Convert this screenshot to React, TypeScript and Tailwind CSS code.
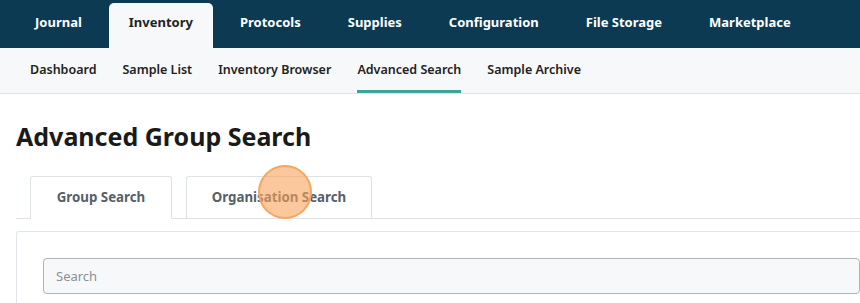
import React from "react";

const topItems = ["Journal", "Inventory", "Protocols", "Supplies", "Configuration", "File Storage", "Marketplace"];
const subItems = ["Dashboard", "Sample List", "Inventory Browser", "Advanced Search", "Sample Archive"];

export default function App() {
  return (
    <div className="h-[303px] w-[860px] overflow-hidden bg-white font-['Noto_Sans',sans-serif]">
      {/* top nav */}
      <div className="flex h-12 items-end gap-[7px] bg-[#0b3a52] pl-[15px]">
        {topItems.map((item) => (
          <div
            key={item}
            className={
              item === "Inventory"
                ? "flex h-[45px] items-center rounded-t-[5px] bg-[#f6f8fa] px-5 pb-[5px] text-[13px] font-bold text-[#222]"
                : "flex h-[45px] items-center px-5 pb-[5px] text-[13px] font-bold text-white"
            }
          >
            {item}
          </div>
        ))}
      </div>

      {/* sub nav */}
      <div className="flex h-[46px] items-stretch gap-[26px] border-b border-[#e2e5e8] bg-[#f6f8fa] pl-[30px]">
        {subItems.map((item) => (
          <div
            key={item}
            className={
              item === "Advanced Search"
                ? "flex items-center border-b-[3px] border-[#3aa69a] pt-[3px] text-[12.5px] font-semibold text-[#222]"
                : "flex items-center text-[12.5px] font-semibold text-[#222]"
            }
          >
            {item}
          </div>
        ))}
      </div>

      <div className="pl-4">
        <h1 className="pt-[26px] text-[25px] font-bold leading-[32px] text-[#1a1a1a]">Advanced Group Search</h1>

        {/* tabs */}
        <div className="relative mt-[24px] flex gap-[14px] border-b border-[#dee2e6] pl-[14px]">
          <div className="-mb-px flex h-[43px] w-[142px] items-center justify-center rounded-t-[3px] border border-b-white border-[#dee2e6] bg-white text-[13.3px] font-bold text-[#56606a]">
            Group Search
          </div>
          <div className="flex h-[42px] w-[186px] items-center justify-center rounded-t-[3px] border border-b-0 border-[#dee2e6] bg-white text-[13.3px] font-bold text-[#56606a]">
            Organisation Search
          </div>
          <div className="absolute left-[242px] top-[-11px] h-[54px] w-[54px] rounded-full border-2 border-[#f7a560] bg-[#f9a25a]/60" />
        </div>

        {/* panel */}
        <div className="mt-3 h-[100px] rounded-tl-[3px] border-l border-t border-[#e3e6e9] pl-[26px] pt-[26px]">
          <div className="flex h-[36px] items-center rounded-[4px] border border-[#aeb3b8] bg-[#f7f8f9] pl-3 pt-[2px] text-[13px] text-[#8a9096]">
            Search
          </div>
        </div>
      </div>
    </div>
  );
}
